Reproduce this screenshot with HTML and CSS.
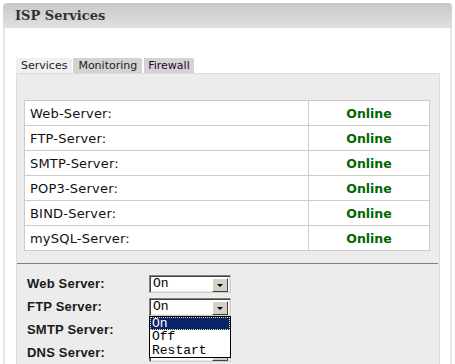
FILE: index.html
```html
<!DOCTYPE html>
<html lang="en">
<head>
    <meta charset="UTF-8">
    <title>ISP Services</title>
    <link rel="stylesheet" href="styles.css">
</head>
<body>
    <!-- box -->
    <div class="box">
        <div class="box-head">ISP Services</div>
        <div class="box-body">
            <ul class="tabs">
                <li class="tab active">Services</li>
                <li class="tab">Monitoring</li>
                <li class="tab tab-fw">Firewall</li>
            </ul>
            <div class="panel">
                <div class="status-wrap">
                    <table class="status">
                        <tr><td class="name">Web-Server:</td><td class="state">Online</td></tr>
                        <tr><td class="name">FTP-Server:</td><td class="state">Online</td></tr>
                        <tr><td class="name">SMTP-Server:</td><td class="state">Online</td></tr>
                        <tr><td class="name">POP3-Server:</td><td class="state">Online</td></tr>
                        <tr><td class="name">BIND-Server:</td><td class="state">Online</td></tr>
                        <tr><td class="name">mySQL-Server:</td><td class="state">Online</td></tr>
                    </table>
                </div>
                <div class="sep"></div>
                <div class="form">
                    <label>Web Server:</label>
                    <div class="select"><span>On</span><i class="btn"></i></div>

                    <label>FTP Server:</label>
                    <div class="select open">
                        <span>On</span><i class="btn"></i>
                        <ul class="options">
                            <li class="sel">On</li>
                            <li>Off</li>
                            <li>Restart</li>
                        </ul>
                    </div>

                    <label>SMTP Server:</label>
                    <div class="select"><span>On</span><i class="btn"></i></div>

                    <label>DNS Server:</label>
                    <div class="select"><span>On</span><i class="btn"></i></div>
                </div>
            </div>
        </div>
    </div>
</body>
</html>
```

FILE: styles.css
```css
/* general */
body {
    margin: 0;
    background: #fff;
    font-family: "DejaVu Sans", Verdana, sans-serif;
    overflow: hidden;
}

/* box */
.box {
    margin: 3px 3px 0 3px;
}
.box-head {
    height: 25px;
    line-height: 25px;
    padding-left: 12px;
    background: linear-gradient(#c9c9c9, #e0e0e0);
    border-radius: 4px 4px 0 0;
    font-family: "DejaVu Serif", Georgia, serif;
    font-weight: bold;
    font-size: 13px;
    color: #333;
}
.box-body {
    background: #fff;
    border-left: 2px solid #e6e6e6;
    border-right: 2px solid #e6e6e6;
    padding: 30px 10px 0 11px;
}

/* tabs */
.tabs {
    list-style: none;
    margin: 0;
    padding: 0;
    display: flex;
    gap: 1px;
}
.tab {
    height: 15px;
    line-height: 15px;
    padding: 0 5px;
    font-size: 11px;
    color: #222;
    background: #d3d3d3;
    border-top-right-radius: 2px;
}
.tab.active {
    background: #f0f0f0;
}
.tab-fw {
    margin-left: 1px;
    padding: 0 4px;
    color: #303;
}

/* panel */
.panel {
    background: #ececec;
    border: 1px solid #dcdcdc;
    padding-top: 26px;
}
.status-wrap {
    padding: 0 9px 0 7px;
}
.status {
    width: 100%;
    border-collapse: collapse;
    background: #fff;
}
.status td {
    border: 1px solid #ccc;
    height: 24px;
    padding: 0;
    font-size: 13px;
}
.status .name {
    width: 278px;
    padding-left: 5px;
    color: #111;
    letter-spacing: 0.2px;
}
.status .state {
    text-align: center;
    font-weight: bold;
    font-size: 12.5px;
    color: #006600;
}
.sep {
    margin: 12px 1px 0 0;
    border-top: 1px solid #808080;
}

/* form */
.form {
    display: grid;
    grid-template-columns: 122px 82px;
    grid-auto-rows: 23px;
    align-items: center;
    padding: 8px 0 0 10px;
}
.form label {
    font-family: "Liberation Sans", Arial, sans-serif;
    font-weight: bold;
    font-size: 13px;
    letter-spacing: 0.2px;
    color: #1a1a1a;
}
.select {
    position: relative;
    box-sizing: border-box;
    width: 82px;
    height: 18px;
    background: #fff;
    border: 1px solid;
    border-color: #808080 #d4d0c8 #d4d0c8 #808080;
    box-shadow: inset 1px 1px 0 #404040, inset -1px -1px 0 #e8e8e8;
    font-family: "Liberation Mono", "Courier New", monospace;
    font-size: 13px;
    line-height: 16px;
}
.select span {
    padding-left: 3px;
}
.select .btn {
    position: absolute;
    right: 2px;
    top: 2px;
    width: 14px;
    height: 12px;
    background: #d4d0c8;
    border: 1px solid;
    border-color: #fff #404040 #404040 #fff;
}
.select .btn::after {
    content: "";
    position: absolute;
    left: 4px;
    top: 5px;
    border-left: 3px solid transparent;
    border-right: 3px solid transparent;
    border-top: 3px solid #000;
}

/* dropdown */
.options {
    list-style: none;
    margin: 0;
    padding: 0;
    position: absolute;
    left: -1px;
    top: 17px;
    width: 80px;
    background: #fff;
    border: 1px solid #000;
    z-index: 10;
}
.options li {
    height: 13.5px;
    line-height: 13px;
    padding-left: 2px;
    color: #000;
}
.options li.sel {
    background: #0a246a;
    color: #fff;
    outline: 1px dotted #e8e0a0;
    outline-offset: -1px;
}
```
